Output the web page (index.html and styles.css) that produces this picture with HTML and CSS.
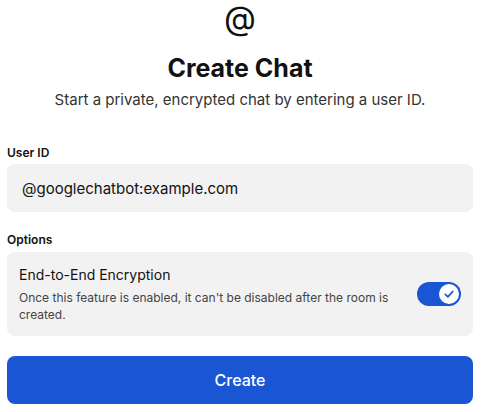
FILE: index.html
```html
<!DOCTYPE html>
<html lang="en">
<head>
<meta charset="utf-8">
<title>Create Chat</title>
<link rel="stylesheet" href="styles.css">
</head>
<body>
<main class="page">
  <header class="header">
    <div class="at-icon">@</div>
    <h1 class="title">Create Chat</h1>
    <p class="subtitle">Start a private, encrypted chat by entering a user ID.</p>
  </header>
  <section class="field">
    <div class="label">User ID</div>
    <div class="input">@googlechatbot:example.com</div>
  </section>
  <section class="field options">
    <div class="label">Options</div>
    <div class="card">
      <div class="card-text">
        <div class="card-title">End-to-End Encryption</div>
        <div class="card-desc">Once this feature is enabled, it can't be disabled after the room is created.</div>
      </div>
      <div class="toggle">
        <div class="knob">
          <svg width="14" height="14" viewBox="0 0 14 14"><path d="M3.2 7.4 L5.9 9.9 L10.8 4.4" fill="none" stroke="#1a56d3" stroke-width="1.6" stroke-linecap="round" stroke-linejoin="round"/></svg>
        </div>
      </div>
    </div>
  </section>
  <button class="btn">Create</button>
</main>
</body>
</html>
```
FILE: styles.css
```css
html, body {
  margin: 0;
  padding: 0;
  background: #ffffff;
}
body {
  font-family: Inter, "Noto Sans", sans-serif;
  color: #111;
}
.page {
  width: 466px;
  padding: 0 9px 0 7px;
  display: flex;
  flex-direction: column;
}
.header {
  display: flex;
  flex-direction: column;
  align-items: center;
}
.at-icon {
  font-size: 33px;
  line-height: 36px;
  color: #111;
}
.title {
  margin: 17px 0 0;
  font-size: 25px;
  line-height: 30px;
  font-weight: 700;
  color: #111;
}
.subtitle {
  margin: 7px 0 0;
  font-size: 15px;
  line-height: 20px;
  color: #333;
}
.field {
  display: flex;
  flex-direction: column;
  margin-top: 35px;
}
.options {
  margin-top: 20px;
}
.label {
  font-size: 12px;
  line-height: 16px;
  font-weight: 600;
  color: #111;
  margin-bottom: 3px;
}
.options .label {
  margin-bottom: 4px;
}
.input {
  height: 48px;
  box-sizing: border-box;
  background: #f2f2f2;
  border-radius: 8px;
  padding: 0 15px;
  display: flex;
  align-items: center;
  font-size: 15px;
  color: #111;
}
.card {
  background: #f2f2f2;
  border-radius: 8px;
  padding: 13px 12px;
  display: flex;
  align-items: center;
  gap: 16px;
}
.card-text {
  flex: 1;
}
.card-title {
  font-size: 14px;
  line-height: 20px;
  color: #111;
}
.card-desc {
  margin-top: 4px;
  font-size: 12px;
  line-height: 17px;
  color: #444;
}
.toggle {
  width: 44px;
  height: 24px;
  border-radius: 12px;
  background: #1a56d3;
  display: flex;
  align-items: center;
  justify-content: flex-end;
  padding: 0 2px;
  box-sizing: border-box;
}
.knob {
  width: 20px;
  height: 20px;
  border-radius: 50%;
  background: #fff;
  display: flex;
  align-items: center;
  justify-content: center;
}
.btn {
  margin-top: 20px;
  height: 48px;
  border: none;
  border-radius: 8px;
  background: #1a56d3;
  color: #fff;
  font-family: Inter, "Noto Sans", sans-serif;
  font-size: 16px;
  font-weight: 500;
}
```
